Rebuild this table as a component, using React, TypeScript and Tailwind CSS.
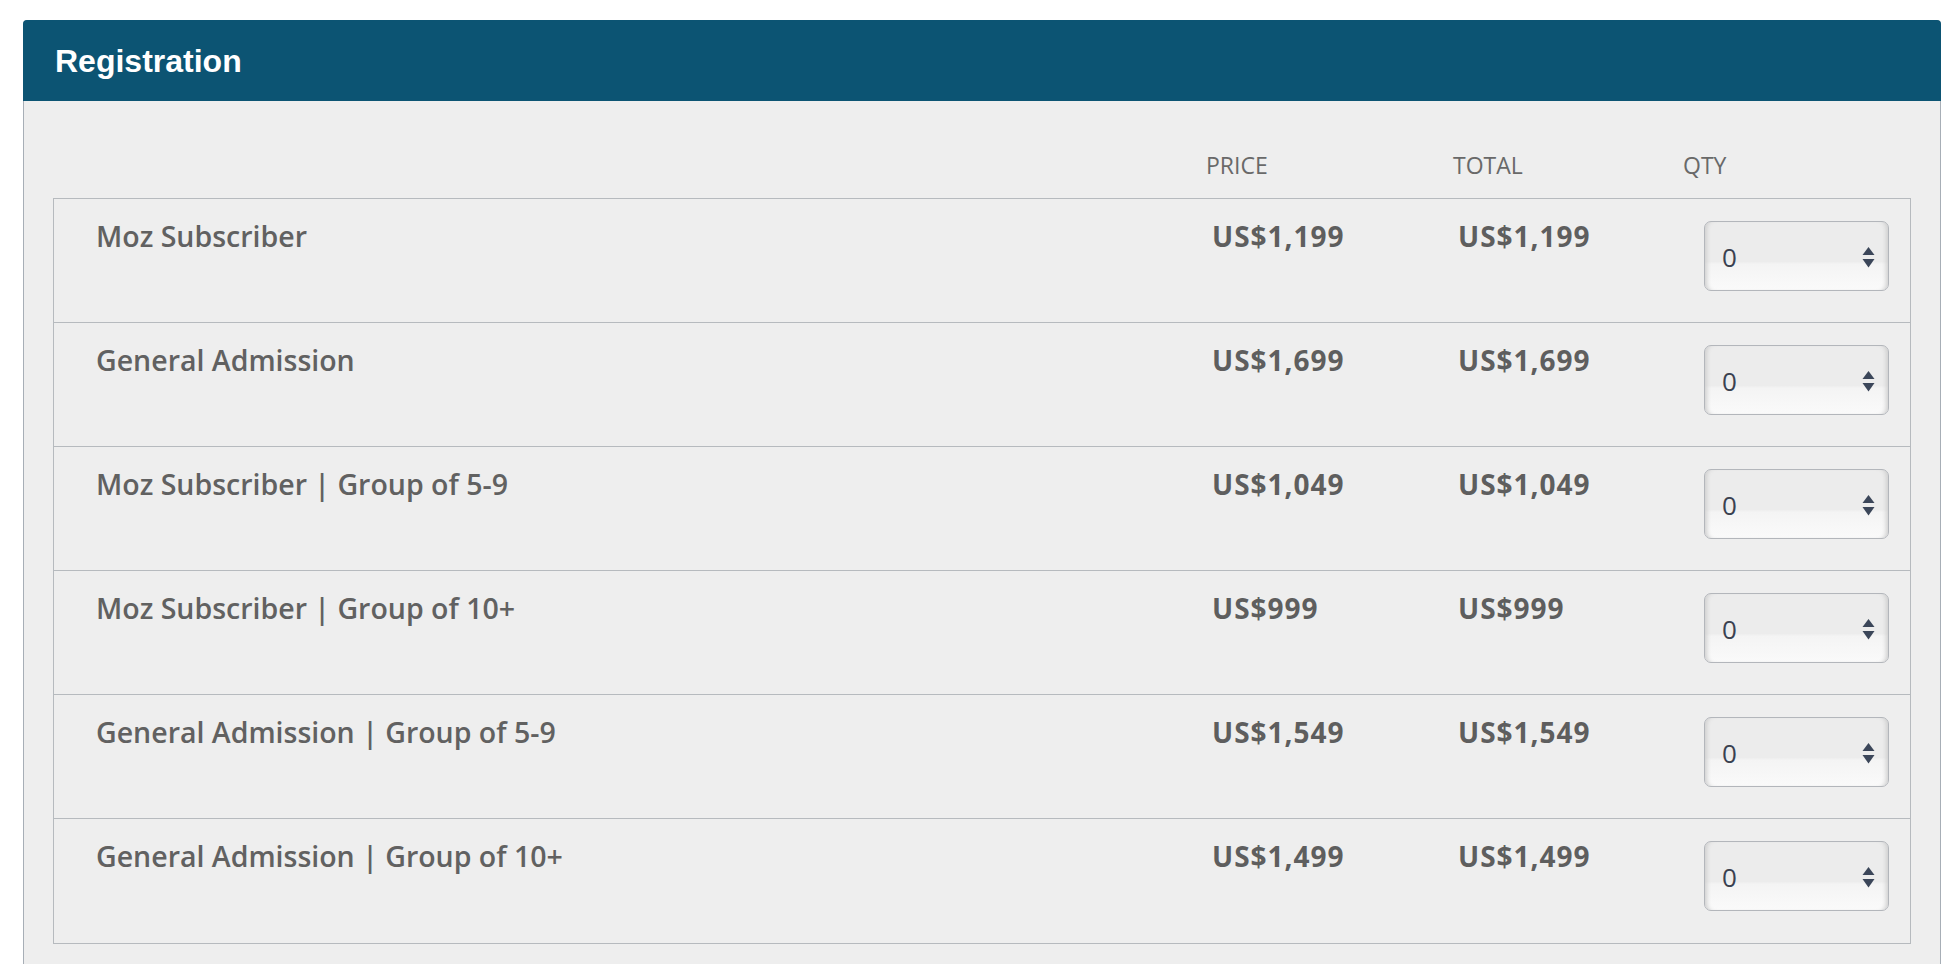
const tickets = [
  { name: "Moz Subscriber", price: "US$1,199" },
  { name: "General Admission", price: "US$1,699" },
  { name: "Moz Subscriber | Group of 5-9", price: "US$1,049" },
  { name: "Moz Subscriber | Group of 10+", price: "US$999" },
  { name: "General Admission | Group of 5-9", price: "US$1,549" },
  { name: "General Admission | Group of 10+", price: "US$1,499" },
];

function QtySelect() {
  return (
    <div className="relative w-[185px] h-[70px] mt-[22px] rounded-[7px] border border-[#b3b6bb] bg-[linear-gradient(to_bottom,#ececec_0%,#ececec_58%,#f4f4f4_62%,#fafafa_100%)] shadow-[inset_5px_0_4px_-3px_#cfcfcf,inset_-5px_0_4px_-3px_#cfcfcf] flex items-center justify-between pl-[17px] pr-[13px]">
      <span className="text-[26px] leading-none text-[#3a4150] mt-[1px]">0</span>
      <svg width="13" height="22" viewBox="0 0 13 22" className="mt-[4px]">
        <path d="M6.5 0 L12.5 8 L0.5 8 Z" fill="#3b4659" />
        <path d="M0.5 12 L12.5 12 L6.5 20.5 Z" fill="#3b4659" />
      </svg>
    </div>
  );
}

export default function App() {
  return (
    <div className="min-h-screen bg-white pt-[20px] pl-[23px] pr-[17px] font-['Open_Sans',sans-serif]">
      <div className="border border-[#a7aeb6] rounded-t-[4px] bg-[#eeeeee] pb-[30px]">
        <div className="h-[81px] -mt-px -mx-px rounded-t-[4px] bg-[#0c5473] flex items-center pl-[32px]">
          <h2 className="text-white font-bold text-[32px] font-['Liberation_Sans',Arial,sans-serif]">Registration</h2>
        </div>

        <div className="px-[29px] pt-[48px]">
          <div className="flex h-[32px] px-px text-[23px] leading-[32px] text-[#696969]">
            <div className="flex-1" />
            <div className="w-[247px]">PRICE</div>
            <div className="w-[230px]">TOTAL</div>
            <div className="w-[227px]">QTY</div>
          </div>

          <div className="mt-[17px] border border-[#b6babe]">
            {tickets.map((t, i) => (
              <div
                key={t.name}
                className={`flex items-start h-[124px] ${i < tickets.length - 1 ? "border-b border-[#b6babe]" : "h-[123px]"}`}
              >
                <div className="flex-1 pl-[42px] pt-[18px] text-[28.5px] leading-[38px] font-semibold text-[#616161]">
                  {t.name}
                </div>
                <div className="w-[246px] pt-[18px] text-[28px] leading-[38px] font-bold tracking-[1px] text-[#5e5e5e]">
                  {t.price}
                </div>
                <div className="w-[246px] pt-[18px] text-[28px] leading-[38px] font-bold tracking-[1px] text-[#5e5e5e]">
                  {t.price}
                </div>
                <QtySelect />
                <div className="w-[21px]" />
              </div>
            ))}
          </div>
        </div>
      </div>
    </div>
  );
}
